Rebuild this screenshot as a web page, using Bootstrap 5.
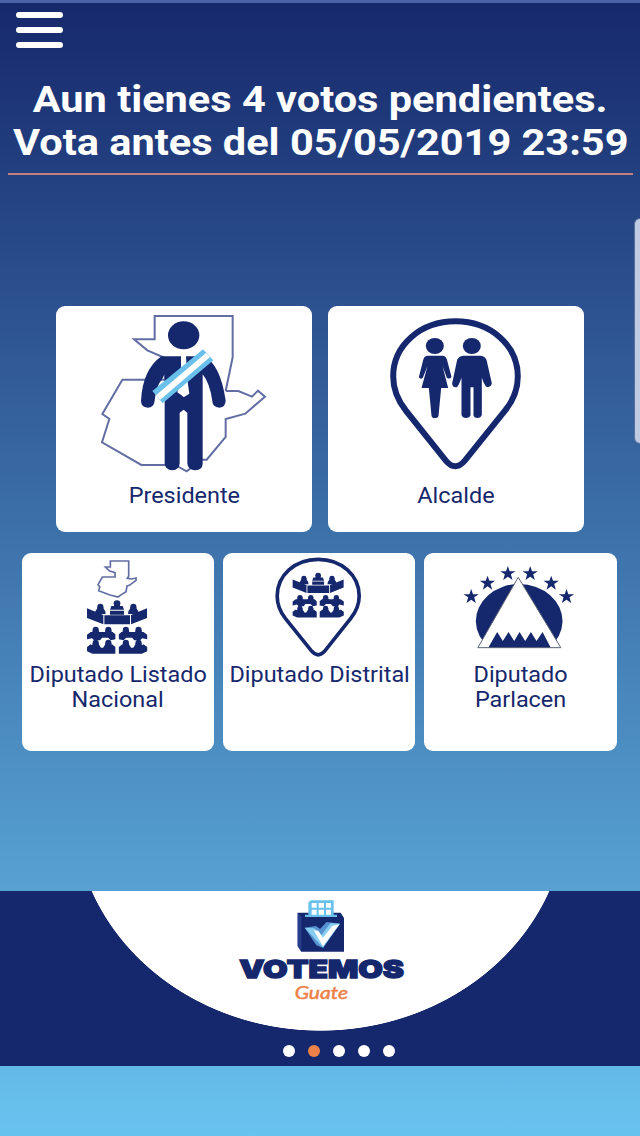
<!DOCTYPE html>
<html lang="es">
<head>
<meta charset="utf-8">
<meta name="viewport" content="width=device-width, initial-scale=1">
<title>Votemos Guate</title>
<link href="https://cdn.jsdelivr.net/npm/bootstrap@5.3.0/dist/css/bootstrap.min.css" rel="stylesheet">
<style>
:root { --navy: #16286d; --sky: #69c0eb; --orange: #ee8147; }
body {
  height: 1136px; overflow: hidden; color: var(--navy);
  font-family: Roboto, "Liberation Sans", sans-serif;
  background: linear-gradient(#16286c, #69c3ef);
}
.status-strip { height: 3px; background: #4a62a5; }
.menu-btn { margin: 9px 0 0 16px; width: 47px; height: 36px; }
.menu-btn span { height: 6px; border-radius: 3px; background: #fff; }
.headline { font-size: 36.2px; line-height: 43px; font-weight: 700; margin: 30px 0 0; height: 86px; }
.wide { display: inline-block; white-space: nowrap; transform: scaleX(1.105); }
.headline .wide { transform: translateX(.5px) scaleX(1.147); }
.rule { height: 2px; margin: 9px 7px 0 8px; background: #c4807c; }
.main-row { margin: 130.5px 56.5px 0 56px; gap: 15.5px; height: 226.5px; }
.sub-row { margin: 20.5px 23.5px 0 22px; gap: 9.2px; height: 198.5px; }
.vote { flex: 1 1 0; min-width: 0; border: 0; border-radius: 9px; background: #fff; color: var(--navy); font-size: 21.2px; line-height: 25px; }
.main-row svg { height: 173.3px; margin-bottom: 4px; }
.sub-row svg { height: 108px; margin-bottom: 1px; }
.brandbar { height: 175px; margin-top: 139.5px; background: var(--navy); }
.dish { height: 140px; background: radial-gradient(ellipse 247px 223px at 320.5px -83px, #fff 99.7%, transparent 100%); }
.dots { gap: 13px; margin: 14px 0 0 283px; }
.dots span { width: 12px; height: 12px; border-radius: 50%; background: #fff; }
.dots .current { background: var(--orange); }
.side-handle { top: 219px; width: 5px; height: 224px; border-radius: 6px 0 0 6px; background: #bfcbe3; box-shadow: 0 0 1px 1px #58719f; }
</style>
</head>
<body class="d-flex flex-column position-relative">
<svg width="0" height="0" class="position-absolute" aria-hidden="true">
  <defs>
    <g id="member">
      <ellipse cx="0" cy="0" rx="9" ry="8.500"/>
      <path d="M-9 0H9Q9 6 12 9Q16 12 16 22H-16Q-16 12-12 9Q-9 6-9 0Z"/>
    </g>
    <g id="bench">
      <use href="#member" x="77" y="224"/><use href="#member" x="115" y="224"/>
      <path d="M51 239L62 231H128L136 238V253L122 256L114 248H96L90 256H72L66 250L51 253Z"/>
      <use href="#member" x="77" y="263"/><use href="#member" x="115" y="263"/>
      <path d="M51 276L62 268L78 278H114L126 268L136 276V296H67L51 289Z"/>
    </g>
    <g id="chamber" fill="#16286d">
      <use href="#member" x="91" y="155"/><use href="#member" x="190" y="155"/>
      <ellipse cx="141" cy="145" rx="10" ry="9"/>
      <path d="M132 146H150V153H158L162 164H120L124 153H132ZM120 167H162V179H120Z"/>
      <path d="M51 160L100 180V208L51 189ZM231 160L183 180V208L231 189ZM103 181H180V208H103Z"/>
      <use href="#bench"/>
      <use href="#bench" transform="matrix(-1 0 0 1 282.500 0)"/>
    </g>
    <path id="star" fill="#16286d" d="M0-22L5.500-6.500H23L9 3L14 20L0 10L-14 20L-9 3L-23-6.500H-5.500Z"/>
  </defs>
</svg>

<div class="status-strip flex-shrink-0"></div>
<header>
  <div class="menu-btn d-flex flex-column justify-content-between" role="button" aria-label="Menú"><span></span><span></span><span></span></div>
  <h1 class="headline text-white text-center"><span class="wide">Aun tienes 4 votos pendientes.</span><br><span class="wide">Vota antes del 05/05/2019 23:59</span></h1>
  <div class="rule"></div>
</header>

<main>
  <div class="main-row d-flex">
    <a class="vote card text-center text-decoration-none">
      <svg viewBox="18 18 768 520">
        <path fill="none" stroke="#626da3" stroke-width="6" d="M527 273H565L606 290L624 272L645 290L586 341L527 357V411L470 479H455L410 514L375 495H274L156 427L178 357L157 342L217 239H345V174L292 151L252 118H314V48H548V172L527 273"/>
        <path fill="#fff" d="M390 170H412V495H390Z"/>
        <g fill="#16286d">
          <ellipse cx="401" cy="106" rx="47" ry="42"/>
          <path d="M334 169H393V280L400 291L414 280L408 169H460Q510 190 527 301Q527 322 508 323Q488 322 487 304Q480 250 458 223V492Q457 510 436 511Q413 510 412 490V338L401 329L389 338V490Q388 510 367 511Q345 510 344 490V222L337 236Q318 258 314 302Q312 322 293 323Q273 321 273 302Q278 209 334 169Z"/>
        </g>
        <path fill="#fff" d="M393 168H408L405 190L418 281L402 291L382 277L397 190Z"/>
        <path fill="#69c0eb" d="M459 148L490 181L338 310L307 273Z"/>
        <path fill="#fff" d="M468 159L480 171L330 300L318 286Z"/>
      </svg>
      <div><span class="wide">Presidente</span></div>
    </a>
    <a class="vote card text-center text-decoration-none">
      <svg viewBox="22.500 18 768 520">
        <path fill="none" stroke="#16286d" stroke-width="18" d="M405 64C300 64 218 136 218 229C218 270 230 300 257 333L376 482Q404 516 433 482L553 333C580 300 592 270 592 229C592 136 510 64 405 64Z"/>
        <g fill="#16286d">
          <ellipse cx="343" cy="138" rx="27" ry="24"/><ellipse cx="454" cy="138" rx="27" ry="24"/>
          <path d="M320 167H366Q376 168 379 178L393 230Q388 240 379 233L366 198L383 264H362L354 347Q353 354 343 354Q334 354 333 347L325 264H303L321 198L307 233Q301 240 295 232L308 180Q311 168 320 167Z"/>
          <path d="M428 167H481Q493 169 498 179L514 250Q511 263 499 261Q493 259 484 233V345Q481 354 471 354Q461 354 459 346V262H450V346Q447 354 437 354Q426 354 423 345V233Q414 259 408 262Q395 263 395 250L410 179Q415 169 428 167Z"/>
        </g>
      </svg>
      <div><span class="wide">Alcalde</span></div>
    </a>
  </div>

  <div class="sub-row d-flex">
    <a class="vote card text-center text-decoration-none">
      <svg viewBox="21 24 576 324">
        <path fill="none" stroke="#626da3" stroke-width="5" d="M286 48H341V94L337 100L350 102L363 99V106L343 121L336 123L333 140L319 149L309 156L285 150L251 137L254 126L249 119L262 96H300V83L284 78L271 66H286Z"/>
        <use href="#chamber" transform="translate(165 30)"/>
      </svg>
      <div><span class="wide">Diputado Listado</span><br><span class="wide">Nacional</span></div>
    </a>
    <a class="vote card text-center text-decoration-none">
      <svg viewBox="16.500 24 576 324">
        <path fill="none" stroke="#16286d" stroke-width="11" d="M302 43C232 43 179 91 179 153C179 180 187 200 204 221L283 319Q302 340 321 319L399 221C416 200 425 180 425 153C425 91 372 43 302 43Z"/>
        <use href="#chamber" transform="translate(182 -30) scale(.85 .835)"/>
      </svg>
      <div><span class="wide">Diputado Distrital</span></div>
    </a>
    <a class="vote card text-center text-decoration-none">
      <svg viewBox="13.500 24 576 324">
        <path fill="#16286d" d="M210 309A130 111 0 1 1 388 309Z"/>
        <path fill="#fff" stroke="#5c6374" stroke-width="3" d="M296 97L424 308H175Z"/>
        <path fill="#16286d" d="M207 307L233 261L250 288L267 261L284 288L300 261L317 288L334 261L351 288L369 261L393 307Z"/>
        <use href="#star" x="155" y="154"/><use href="#star" x="204" y="114"/><use href="#star" x="265" y="85"/>
        <use href="#star" x="332" y="85"/><use href="#star" x="395" y="114"/><use href="#star" x="441" y="154"/>
      </svg>
      <div><span class="wide">Diputado<br>Parlacen</span></div>
    </a>
  </div>
</main>

<footer class="brandbar flex-shrink-0">
  <div class="dish">
    <svg class="d-block mx-auto" width="200" height="130" viewBox="0 3 600 390">
      <path fill="#16286d" d="M233 68H362L372 84V185H244L233 168Z"/>
      <path fill="#283d8c" d="M233 68L244 80V185L233 168Z"/>
      <path fill="#69c0eb" d="M265 38L272 31H341V74H351V81H255V74H265Z"/>
      <path fill="#fff" d="M275 39H290V53H275ZM296 39H312V53H296ZM318 39H333V53H318ZM275 59H290V74H275ZM296 59H312V74H296ZM318 59H333V74H318Z"/>
      <path fill="#5592cf" d="M254 113L288 108L300 117L320 96L360 101L309 173L289 166Z"/>
      <path fill="#86cdf1" d="M254 113L283 115L302 137L332 99L360 101L309 173Z"/>
      <path fill="#fff" d="M281 121L295 122L309 143L337 108L358 103L309 169Z"/>
      <text x="58" y="264" textLength="494" lengthAdjust="spacingAndGlyphs" font-family="Inter, 'DejaVu Sans'" font-weight="900" font-size="74" fill="#16286d" stroke="#16286d" stroke-width="4">VOTEMOS</text>
      <text x="224" y="326" textLength="160" lengthAdjust="spacingAndGlyphs" font-family="Lato" font-style="italic" font-size="54" fill="#ee8147" stroke="#ee8147" stroke-width="1.500">Guate</text>
    </svg>
  </div>
  <div class="dots d-flex"><span></span><span class="current"></span><span></span><span></span><span></span></div>
</footer>

<div class="side-handle position-absolute end-0"></div>
<script src="https://cdn.jsdelivr.net/npm/bootstrap@5.3.0/dist/js/bootstrap.bundle.min.js"></script>
</body>
</html>
